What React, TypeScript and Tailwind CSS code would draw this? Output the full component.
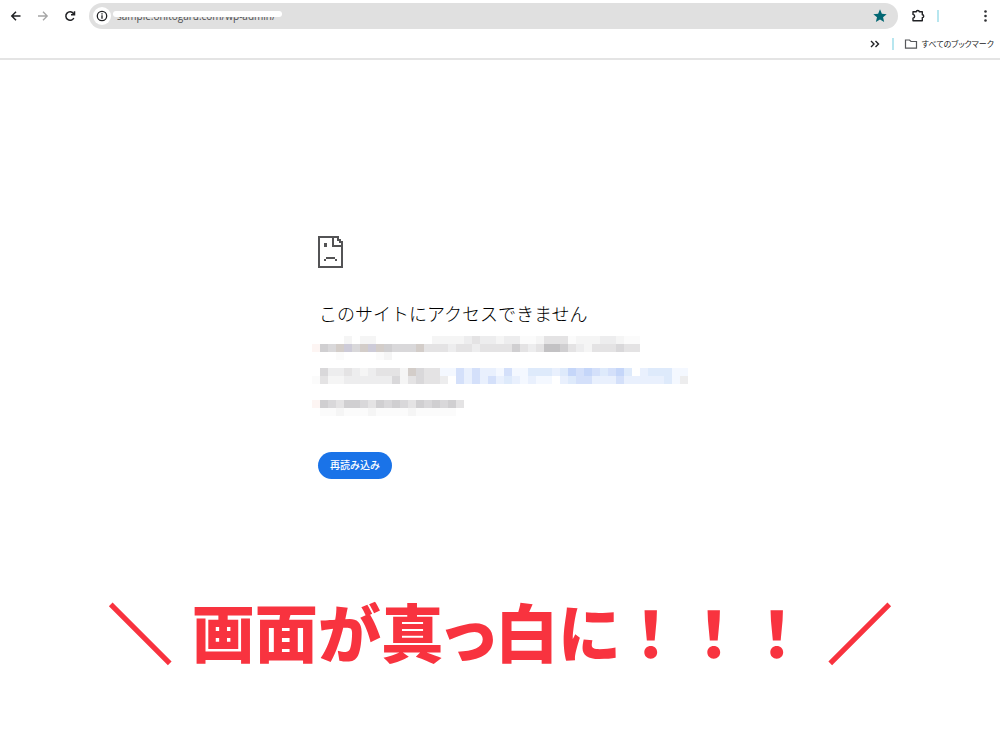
import React from "react";

type Band = { y: number; cells: string };

const palette: Record<string, string> = {
  ".": "#ffffff", a: "#fbfbfb", b: "#f5f5f5", c: "#ededee", d: "#e4e3e4", e: "#d9d8da",
  f: "#d0cfd1", g: "#c3c2c4", p: "#fdf5f3", s: "#d3cdc9", v: "#cdcbd8",
  h: "#f4f8ff", i: "#e9f0fd", j: "#deeafb", k: "#d4e0fa", l: "#c5d6f9",
};

const bands: Band[] = [
  { y: 0, cells: "....b.bb.......bbbbcdccbccaabdddabbbccbaa" },
  { y: 8, cells: "pfesvesvsfeeesdddcddcddddfdcdggfdcbdddedd" },
  { y: 16, cells: "...a....ab" },
  { y: 32, cells: ".eccdcbcdddbseddhhkikiihkhhjjjijlklkjklj.ijjjhh" },
  { y: 40, cells: "adbbccccccebdeddc.kikikijihihh.ijkkiiikiiiiijhc" },
  { y: 64, cells: "pfedffedfefedfefefd" },
  { y: 72, cells: ".aabaaabaaaabaaaaa" },
];

function Mosaic() {
  return (
    <svg viewBox="0 0 376 80" className="block h-20 w-[376px] max-w-none" shapeRendering="crispEdges" aria-hidden="true">
      {bands.map((b) =>
        b.cells.split("").map((c, i) => (
          <rect key={b.y + "-" + i} x={i * 8} y={b.y} width="8" height="8" fill={palette[c]} />
        )),
      )}
    </svg>
  );
}

const iconButton = "flex size-5 shrink-0 items-center justify-center";

export default function App() {
  return (
    <div className="bg-white font-['Noto_Sans','Noto_Sans_CJK_JP',sans-serif] text-[#202124]">
      <header className="border-b-2 border-[#e4e4e4]">
        <div className="flex h-8 items-center pl-[6px] pr-[5px]">
          <button className={iconButton} aria-label="戻る">
            <svg viewBox="0 0 16 16" className="size-4" fill="none" stroke="#202124" strokeWidth="1.5"><path d="M12.500 8H4M8 3.800 3.800 8 8 12.200" /></svg>
          </button>
          <button className={iconButton + " ml-[7px]"} aria-label="進む">
            <svg viewBox="0 0 16 16" className="size-4" fill="none" stroke="#a5a5a5" strokeWidth="1.3"><path d="M3 8H12M8 3.800 12.200 8 8 12.200" /></svg>
          </button>
          <button className={iconButton + " ml-[7px]"} aria-label="更新">
            <svg viewBox="0 0 16 16" className="size-4" fill="none" stroke="#202124" strokeWidth="1.5"><path d="M11.800 10A4.200 4.200 0 1 1 11.400 5.500L12.300 6.500M12.500 3.200V6.700H9" /></svg>
          </button>
          <div className="ml-[9px] flex h-[26px] min-w-0 flex-1 items-center rounded-full bg-[#e0e0e0] pl-1 pr-2">
            <button className="flex size-[18px] shrink-0 items-center justify-center rounded-full bg-white" aria-label="サイト情報">
              <svg viewBox="0 0 12 12" className="size-3" fill="none" stroke="#202124" strokeWidth="1.300"><circle cx="6" cy="6" r="4.700" /><path d="M6 5.300V8.700M6 3.300V4.500" /></svg>
            </button>
            <div className="relative ml-[6px] min-w-0 flex-1">
              <input aria-label="アドレス" readOnly defaultValue="sample.onitogaru.com/wp-admin/" className="block h-5 w-full bg-transparent font-['Open_Sans',sans-serif] text-[10px] text-[#4b4c4e] outline-none" />
              <span className="absolute -left-[4px] top-[5px] h-[6px] w-[169px] rounded-full bg-white" />
            </div>
            <button className={iconButton} aria-label="ブックマーク済み">
              <svg viewBox="0 0 24 24" className="size-4" fill="#026773"><path d="M12 17.300 18.200 21l-1.600-7L22 9.200l-7.200-.600L12 2 9.200 8.600 2 9.200 7.500 14l-1.700 7z" /></svg>
            </button>
          </div>
          <button className={iconButton + " ml-[10px]"} aria-label="拡張機能">
            <svg viewBox="0 0 16 16" className="size-4" fill="none" stroke="#202124" strokeWidth="1.400" strokeLinejoin="round"><path d="M3 3.700H6.300C6.300 2 9.300 2 9.300 3.700H12.300V6.800C14.200 6.800 14.200 9.600 12.300 9.600V12.800H3V10.200C5.200 9.800 5.200 6.800 3 6.400Z" /></svg>
          </button>
          <span className="ml-[9px] h-3 w-[2px] bg-[#b7e6ef]" />
          <button className={iconButton + " ml-[36px]"} aria-label="メニュー">
            <svg viewBox="0 0 16 16" className="size-4" fill="#303134"><circle cx="8.500" cy="3.500" r="1.300" /><circle cx="8.500" cy="8" r="1.300" /><circle cx="8.500" cy="12.500" r="1.300" /></svg>
          </button>
        </div>
        <div className="flex h-[26px] items-start justify-end pr-[6px]">
          <div className="flex h-6 items-center">
            <button className={iconButton} aria-label="その他のブックマーク">
              <svg viewBox="0 0 12 12" className="size-3" fill="none" stroke="#202124" strokeWidth="1.400"><path d="M2 3 5 6 2 9M6.500 3l3 3-3 3" /></svg>
            </button>
            <span className="ml-[7px] h-3 w-[2px] bg-[#b7e6ef]" />
            <button className="ml-[10px] flex items-center gap-1 whitespace-nowrap font-['Noto_Sans_CJK_JP',sans-serif] text-[8px] leading-none">
              <svg viewBox="0 0 14 12" className="h-3 w-[14px]" fill="none" stroke="#55575a" strokeWidth="1.200"><path d="M1.500 2H5.500L7 3.500H12.500V10.200H1.500Z" /></svg>
              <span className="[font-feature-settings:'palt']">すべてのブックマーク</span>
            </button>
          </div>
        </div>
      </header>
      <main>
        <section className="mx-auto w-[362px] pt-[176px]">
          <svg viewBox="0 0 25 32" className="-ml-px block h-8 w-[25px]" fill="#535355" shapeRendering="crispEdges" aria-hidden="true">
            <path d="M0 0H21V2H2V30H23V11H14V0H16V9H23V7H21V5H19V2H21V3H23V5H25V32H0ZM6 7H9V11H6ZM8 21H17V23H8ZM6 23H8V25H6ZM17 23H19V25H17Z" />
          </svg>
          <h1 className="mt-[31px] whitespace-nowrap font-['Noto_Sans_CJK_JP',sans-serif] text-[18px] font-light leading-7 text-black">このサイトにアクセスできません</h1>
          <div className="-ml-[7px] mt-[9px]"><Mosaic /></div>
          <button className="-ml-px mt-9 h-[27px] rounded-full bg-[#1a73e8] px-3 pb-px font-['Noto_Sans_CJK_JP',sans-serif] text-[10px] font-medium leading-none text-white">再読み込み</button>
        </section>
        <p className="mt-[105px] flex justify-center whitespace-nowrap font-['Noto_Sans_CJK_JP',sans-serif] text-[63px] font-black leading-[92px] text-[#f8333f]">
          <span className="[-webkit-text-stroke:2px_#f8333f]">＼</span>
          <span className="ml-5 [font-feature-settings:'palt']">画面が真っ白に</span>
          <span>！！！</span>
          <span className="ml-5 [-webkit-text-stroke:2px_#f8333f]">／</span>
        </p>
      </main>
    </div>
  );
}
